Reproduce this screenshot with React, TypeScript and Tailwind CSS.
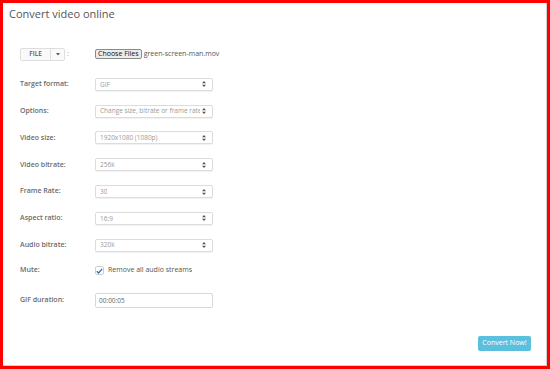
import React from 'react'

const font = { fontFamily: '"Open Sans", "Liberation Sans", sans-serif' }

function Arrows() {
  return (
    <svg width="4" height="6" viewBox="0 0 4 6" className="shrink-0">
      <path d="M2 0 L4 2.3 L0 2.3 Z" fill="#555" />
      <path d="M2 6 L4 3.7 L0 3.7 Z" fill="#555" />
    </svg>
  )
}

function Select({ value }: { value: string }) {
  return (
    <div className="w-[118px] h-[13px] flex items-center justify-between pl-[4px] pr-[6px] bg-white border border-[#dcdcdc] rounded-[2px] shadow-[0_1px_1px_rgba(0,0,0,0.06)]">
      <span className="text-[6.5px] text-[#9a9a9a] whitespace-nowrap overflow-hidden mr-[2px]">{value}</span>
      <Arrows />
    </div>
  )
}

function Label({ children }: { children: React.ReactNode }) {
  return <div className="w-[75px] text-[7px] font-semibold text-[#6a6a6a]">{children}</div>
}

const selects = [
  ['Target format:', 'GIF'],
  ['Options:', 'Change size, bitrate or frame rate'],
  ['Video size:', '1920x1080 (1080p)'],
  ['Video bitrate:', '256k'],
  ['Frame Rate:', '30'],
  ['Aspect ratio:', '16:9'],
  ['Audio bitrate:', '320k'],
]

export default function App() {
  return (
    <div style={font} className="w-[550px] h-[369px] bg-white border-[3px] border-[#ff0000]">
      <div className="h-full flex flex-col border-r border-b border-[#cfcfcf]">
        <h1 className="pl-[6px] pt-[3px] text-[11px] leading-[15px] text-[#555]">Convert video online</h1>

        <div className="pl-[17px] mt-[26px]">
          <div className="flex items-center h-[14px]">
            <div className="w-[75px] flex items-center">
              <div className="flex h-[13px] border border-[#dedede] rounded-[2px] bg-[#fafafa]">
                <div className="w-[30px] flex items-center justify-center text-[6.5px] font-semibold text-[#555] border-r border-[#dedede]">FILE</div>
                <div className="w-[13px] flex items-center justify-center">
                  <svg width="4" height="3" viewBox="0 0 4 3"><path d="M0 0 L4 0 L2 2.5 Z" fill="#555" /></svg>
                </div>
              </div>
              <span className="ml-[2px] text-[7px] text-[#999]">:</span>
            </div>
            <div className="flex items-center">
              <div className="h-[10px] px-[2px] flex items-center border border-[#8a8a8a] rounded-[2px] bg-[#ececec] text-[7px] text-[#111]">Choose Files</div>
              <span className="ml-[2px] text-[7px] text-[#555]">green-screen-man.mov</span>
            </div>
          </div>

          <div className="mt-[10px]">
            {selects.map(([l, v]) => (
              <div key={l} className="flex items-center h-[26.8px]">
                <Label>{l}</Label>
                <Select value={v} />
              </div>
            ))}
            <div className="flex items-center h-[24px]">
              <Label>Mute:</Label>
              <div className="w-[9px] h-[9px] flex items-center justify-center border border-[#cfcfcf] rounded-[2px] bg-white">
                <svg width="7" height="6" viewBox="0 0 7 6"><path d="M0.8 3.2 L2.6 5 L6.2 0.8" stroke="#2f6fc0" strokeWidth="1.3" fill="none" /></svg>
              </div>
              <span className="ml-[4px] text-[7px] text-[#555]">Remove all audio streams</span>
            </div>
            <div className="flex items-center h-[36px]">
              <Label>GIF duration:</Label>
              <div className="w-[118px] h-[15px] flex items-center pl-[3px] border border-[#d8d8d8] rounded-[2px] bg-white text-[6.5px] text-[#666]">00:00:05</div>
            </div>
          </div>
        </div>

        <div className="mt-auto flex justify-end pr-[15px] pb-[14px]">
          <button className="w-[53px] h-[15px] rounded-[2px] bg-[#5bc0de] text-white text-[7px]">Convert Now!</button>
        </div>
      </div>
    </div>
  )
}
